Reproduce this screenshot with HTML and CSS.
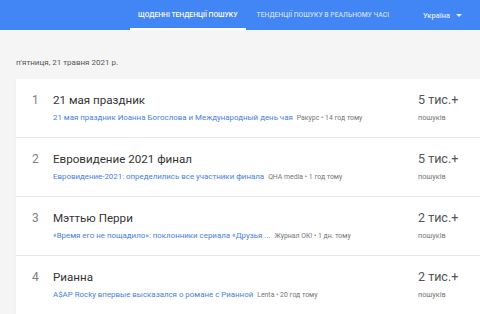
FILE: index.html
```html
<!DOCTYPE html>
<html lang="uk">
<head>
<meta charset="utf-8">
<link rel="stylesheet" href="styles.css">
</head>
<body>
<header class="topbar">
  <nav class="tabs">
    <div class="tab tab-active">Щоденні тенденції пошуку</div>
    <div class="tab">Тенденції пошуку в реальному часі</div>
  </nav>
  <div class="country">Україна <span class="caret"></span></div>
</header>
<main class="content">
  <div class="date">п'ятниця, 21 травня 2021 р.</div>
  <section class="card">
    <div class="row">
      <div class="num">1</div>
      <div class="info">
        <div class="title">21 мая праздник</div>
        <div class="sub"><span class="link">21 мая праздник Иоанна Богослова и Международный день чая</span><span class="src">Ракурс • 14 год тому</span></div>
      </div>
      <div class="count">
        <div class="big">5 тис.+</div>
        <div class="small">пошуків</div>
      </div>
    </div>
    <div class="row">
      <div class="num">2</div>
      <div class="info">
        <div class="title">Евровидение 2021 финал</div>
        <div class="sub"><span class="link">Евровидение-2021: определились все участники финала</span><span class="src">QHA media • 1 год тому</span></div>
      </div>
      <div class="count">
        <div class="big">5 тис.+</div>
        <div class="small">пошуків</div>
      </div>
    </div>
    <div class="row">
      <div class="num">3</div>
      <div class="info">
        <div class="title">Мэттью Перри</div>
        <div class="sub"><span class="link">«Время его не пощадило»: поклонники сериала «Друзья ...</span><span class="src">Журнал ОК! • 1 дн. тому</span></div>
      </div>
      <div class="count">
        <div class="big">2 тис.+</div>
        <div class="small">пошуків</div>
      </div>
    </div>
    <div class="row">
      <div class="num">4</div>
      <div class="info">
        <div class="title">Рианна</div>
        <div class="sub"><span class="link">A$AP Rocky впервые высказался о романе с Рианной</span><span class="src">Lenta • 20 год тому</span></div>
      </div>
      <div class="count">
        <div class="big">2 тис.+</div>
        <div class="small">пошуків</div>
      </div>
    </div>
  </section>
</main>
</body>
</html>
```
FILE: styles.css
```css
* { box-sizing: border-box; }
html, body { margin: 0; padding: 0; }
body {
  background: #f5f5f5;
  font-family: Roboto, "Noto Sans", sans-serif;
  width: 480px;
  height: 314px;
  overflow: hidden;
}
.topbar {
  height: 30px;
  background: #4285f4;
  display: flex;
  align-items: stretch;
  padding-left: 130px;
}
.tabs { display: flex; }
.tab {
  color: rgba(255,255,255,0.72);
  font-size: 6.8px;
  font-weight: 500;
  text-transform: uppercase;
  display: flex;
  align-items: center;
  padding: 0 8px;
  margin-right: 3px;
  border-bottom: 2px solid transparent;
  padding-top: 2px;
}
.tab-active {
  color: #fff;
  border-bottom-color: #fff;
}
.country {
  margin-left: auto;
  margin-right: 18px;
  display: flex;
  align-items: center;
  gap: 6px;
  color: rgba(255,255,255,0.85);
  font-size: 7.5px;
  font-weight: 500;
}
.caret {
  width: 0; height: 0;
  border-left: 3px solid transparent;
  border-right: 3px solid transparent;
  border-top: 3.5px solid rgba(255,255,255,0.85);
}
.content { padding: 0 0 0 16px; }
.date {
  color: #555;
  font-size: 8px;
  padding: 28px 0 0 0;
  height: 49px;
}
.card {
  background: #fff;
  box-shadow: 0 1px 1px rgba(0,0,0,0.06);
}
.row {
  display: flex;
  align-items: flex-start;
  height: 59px;
  border-bottom: 1px solid #e6e6e6;
  padding-top: 13px;
}
.num {
  width: 37px;
  padding-left: 16px;
  color: #808080;
  font-size: 12px;
  line-height: 16px;
}
.info { flex: 1; min-width: 0; }
.title {
  color: #333;
  font-size: 11.6px;
  line-height: 16px;
}
.sub {
  margin-top: 5px;
  font-size: 7.9px;
  line-height: 10px;
  white-space: nowrap;
}
.link { color: #4a80d9; }
.src { color: #757575; font-size: 6.9px; margin-left: 4px; }
.count { width: 62px; }
.big {
  color: #555;
  font-size: 12.5px;
  line-height: 16px;
}
.small {
  margin-top: 5px;
  color: #757575;
  font-size: 7.3px;
  line-height: 10px;
}
```
